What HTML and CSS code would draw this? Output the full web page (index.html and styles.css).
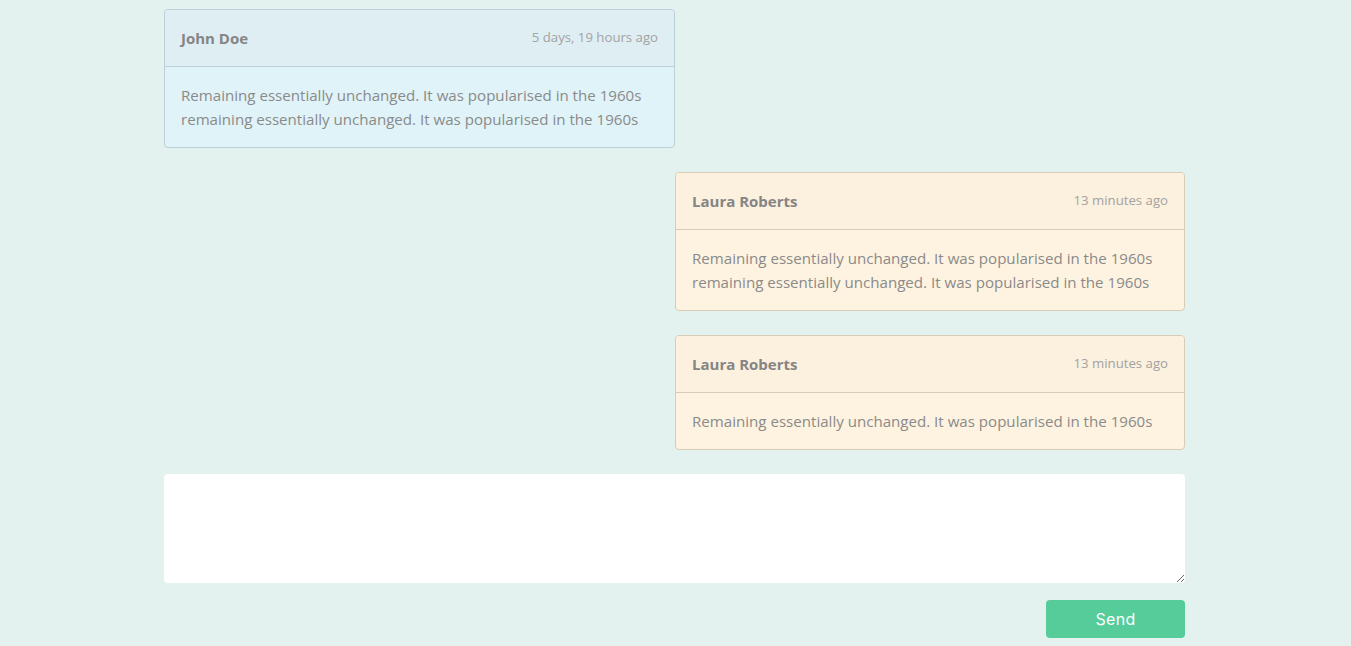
FILE: index.html
```html
<!DOCTYPE html>
<html lang="en">
<head>
<meta charset="utf-8">
<title>Chat</title>
<link rel="stylesheet" href="styles.css">
</head>
<body>
<div class="chat">
  <div class="message message-left info">
    <div class="message-header">
      <span class="name">John Doe</span>
      <span class="time">5 days, 19 hours ago</span>
    </div>
    <div class="message-body">Remaining essentially unchanged. It was popularised in the 1960s remaining essentially unchanged. It was popularised in the 1960s</div>
  </div>
  <div class="message message-right warn">
    <div class="message-header">
      <span class="name">Laura Roberts</span>
      <span class="time">13 minutes ago</span>
    </div>
    <div class="message-body">Remaining essentially unchanged. It was popularised in the 1960s remaining essentially unchanged. It was popularised in the 1960s</div>
  </div>
  <div class="message message-right warn">
    <div class="message-header">
      <span class="name">Laura Roberts</span>
      <span class="time">13 minutes ago</span>
    </div>
    <div class="message-body">Remaining essentially unchanged. It was popularised in the 1960s</div>
  </div>
  <form class="composer">
    <textarea class="composer-input"></textarea>
    <div class="composer-actions">
      <button type="button" class="send-btn">Send</button>
    </div>
  </form>
</div>
</body>
</html>
```
FILE: styles.css
```css
html, body {
  margin: 0;
  padding: 0;
}
body {
  background: #e3f2ee;
  font-family: "Open Sans", "Noto Sans", sans-serif;
  color: #888;
}
.chat {
  width: 1021px;
  margin-left: 164px;
  padding-top: 9px;
  display: flex;
  flex-direction: column;
}
.message {
  width: 511px;
  box-sizing: border-box;
  border: 1px solid;
  border-radius: 4px;
  margin-bottom: 24px;
  overflow: hidden;
}
.message-right {
  align-self: flex-end;
  width: 510px;
}
.message-header {
  display: flex;
  justify-content: space-between;
  align-items: center;
  padding: 16px 16px;
  height: 24px;
  border-bottom: 1px solid;
}
.name {
  font-weight: 700;
  font-size: 15px;
  color: #858585;
}
.time {
  font-size: 13.2px;
  color: #a3a3a3;
  position: relative;
  top: -1px;
}
.message-body {
  padding: 16px 16px;
  font-size: 15.1px;
  line-height: 24px;
  color: #8a8a8a;
}
.info {
  border-color: #bdd0d6;
  background: #e0f3f8;
}
.info .message-header {
  background: #dfeef2;
  border-bottom-color: #bdd0d6;
}
.warn {
  border-color: #d8ccb6;
  background: #fef3e0;
}
.warn .message-header {
  background: #fcf0de;
  border-bottom-color: #d8ccb6;
}
.composer {
  display: flex;
  flex-direction: column;
}
.composer-input {
  display: block;
  box-sizing: border-box;
  width: 100%;
  height: 109px;
  border: none;
  border-radius: 4px;
  background: #fff;
  margin: 0;
  padding: 8px 12px;
  font-family: inherit;
}
.composer-actions {
  display: flex;
  justify-content: flex-end;
  padding-top: 17px;
}
.send-btn {
  width: 139px;
  height: 38px;
  border: none;
  border-radius: 4px;
  background: #55cc9a;
  color: #fff;
  font-family: "Inter", "Open Sans", sans-serif;
  font-weight: 400;
  font-size: 16px;
  letter-spacing: 0.3px;
  padding-bottom: 2px;
}
```
